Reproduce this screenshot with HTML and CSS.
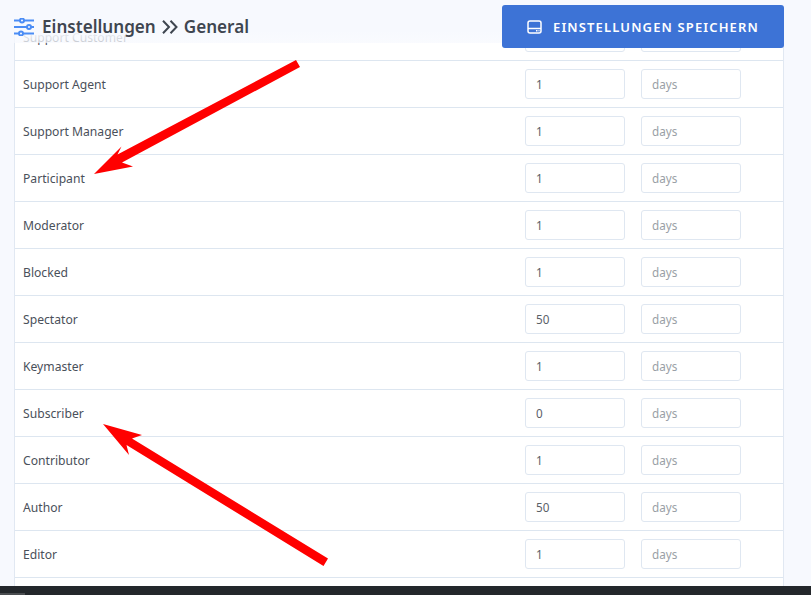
FILE: index.html
```html
<!DOCTYPE html>
<html lang="de">
<head>
<meta charset="utf-8">
<title>Einstellungen</title>
<link rel="stylesheet" href="styles.css">
</head>
<body>
<div class="viewport">
  <main class="content">
    <div class="table">
      <div class="row"><span class="role">Support Customer</span><input class="field" value="1"><input class="field" placeholder="days"></div>
      <div class="row"><span class="role">Support Agent</span><input class="field" value="1"><input class="field" placeholder="days"></div>
      <div class="row"><span class="role">Support Manager</span><input class="field" value="1"><input class="field" placeholder="days"></div>
      <div class="row"><span class="role">Participant</span><input class="field" value="1"><input class="field" placeholder="days"></div>
      <div class="row"><span class="role">Moderator</span><input class="field" value="1"><input class="field" placeholder="days"></div>
      <div class="row"><span class="role">Blocked</span><input class="field" value="1"><input class="field" placeholder="days"></div>
      <div class="row"><span class="role">Spectator</span><input class="field" value="50"><input class="field" placeholder="days"></div>
      <div class="row"><span class="role">Keymaster</span><input class="field" value="1"><input class="field" placeholder="days"></div>
      <div class="row"><span class="role">Subscriber</span><input class="field" value="0"><input class="field" placeholder="days"></div>
      <div class="row"><span class="role">Contributor</span><input class="field" value="1"><input class="field" placeholder="days"></div>
      <div class="row"><span class="role">Author</span><input class="field" value="50"><input class="field" placeholder="days"></div>
      <div class="row"><span class="role">Editor</span><input class="field" value="1"><input class="field" placeholder="days"></div>
      <div class="row"></div>
    </div>
    <header class="topbar">
      <h1 class="title">
        <svg class="title-icon" width="20" height="18" viewBox="0 0 20 18" fill="none" stroke="#4b8df5" stroke-width="2"><path d="M0 2.500h20M0 9h20M0 15.500h20"/><circle cx="8" cy="2.500" r="2" fill="#f7f9fe"/><circle cx="15" cy="9" r="2" fill="#f7f9fe"/><circle cx="7" cy="15.500" r="2" fill="#f7f9fe"/></svg>
        <span>Einstellungen</span>
        <svg class="chevrons" width="16" height="14" viewBox="0 0 16 14" fill="none" stroke="#3f4650" stroke-width="2"><path d="M1 .7l6 6.300-6 6.300M8.500 .7l6 6.300-6 6.300"/></svg>
        <span>General</span>
      </h1>
      <button class="save" type="button">
        <svg width="15" height="14" viewBox="0 0 15 14" fill="none" stroke="#fff" stroke-width="1.500"><rect x="1" y="1" width="13" height="12" rx="2"/><path d="M1 8.500h13"/><path d="M9 10.800h1.500M11.500 10.800h1"/></svg>
        <span>EINSTELLUNGEN SPEICHERN</span>
      </button>
    </header>
    <svg class="arrows" width="811" height="586" viewBox="0 0 811 586" fill="#ff0000">
      <path d="M94 174L121.500 146.500L117.500 154.500L296 60L300 67L122 162.500L133 166.500Z"/>
      <path d="M103 424L142 435L132 438.500L328 558.500L323.500 566L126.500 445L129 455Z"/>
    </svg>
  </main>
  <div class="taskbar"><span class="task-item"></span></div>
</div>
</body>
</html>
```
FILE: styles.css
```css
* { box-sizing: border-box; }
html, body { margin: 0; height: 100%; }
body { font-family: "Noto Sans", "Open Sans", sans-serif; color: #3f4650; overflow: hidden; }
.viewport { width: 811px; height: 595px; display: flex; flex-direction: column; background: #f7f9fe; }
.content { position: relative; flex: 1; overflow: hidden; padding: 14px 27px 0 14px; }
.table { background: #fff; border-left: 1px solid #e1e8f2; border-right: 1px solid #e1e8f2; }
.row { height: 47px; display: flex; align-items: center; padding-left: 8px; border-bottom: 1px solid #dde6f0; }
.role { width: 502px; font-size: 12.15px; color: #4a505a; }
.field { width: 100px; height: 30px; margin-right: 16px; padding: 0 10px; border: 1px solid #dfe7f1; border-radius: 3px; background: #fff; font: 11.7px "Noto Sans", sans-serif; color: #5a6068; outline: none; }
.field::placeholder { color: #9a9fa6; opacity: 1; }
.topbar { position: absolute; top: 0; left: 0; width: 784px; height: 43px; display: flex; justify-content: space-between; background: linear-gradient(#f7f9fe 70%, rgba(247, 249, 254, .72)); }
.title { display: flex; align-items: center; gap: 6px; margin: 0; padding: 10px 0 0 14px; height: 43px; font-size: 17.1px; font-weight: 600; color: #3f4650; }
.title-icon { margin-right: 2px; }
.save { display: flex; align-items: center; justify-content: center; gap: 11px; width: 282px; height: 43px; margin-top: 5px; border: 0; border-radius: 3px; background: #3d73d6; color: #fff; font: 600 13px "Noto Sans", sans-serif; letter-spacing: 1.13px; }
.arrows { position: absolute; top: 0; left: 0; }
.taskbar { height: 9px; padding-top: 7px; background: #23272b; }
.task-item { display: block; width: 25px; height: 2px; background: #4a4d50; }
```
